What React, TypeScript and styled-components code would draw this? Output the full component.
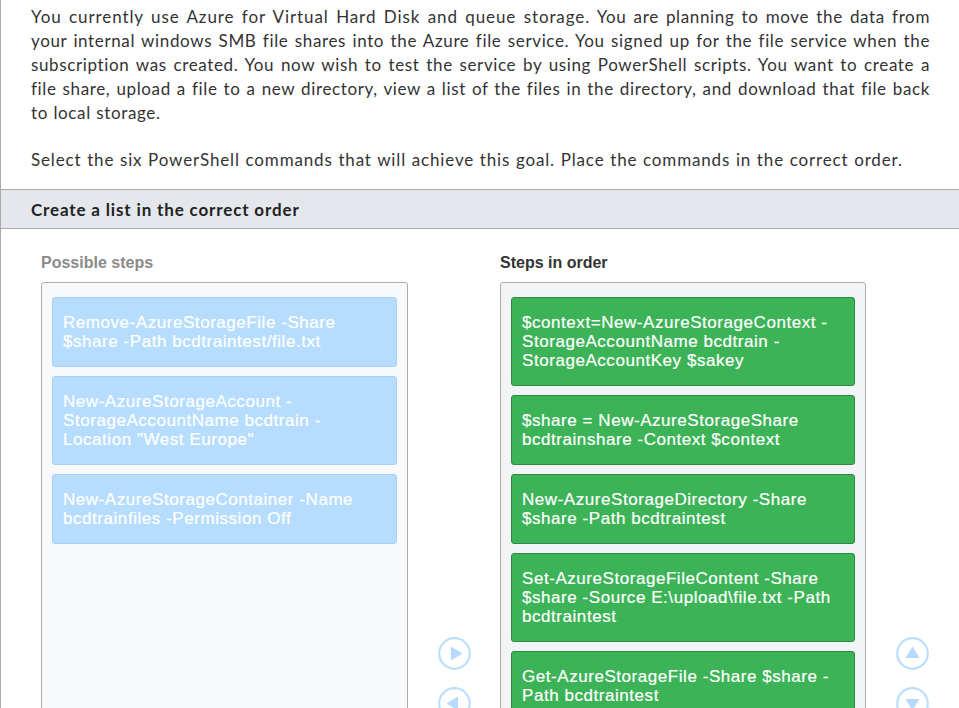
import React from 'react';
import styled, { createGlobalStyle } from 'styled-components';

const GlobalStyle = createGlobalStyle`
  html, body {
    margin: 0;
    padding: 0;
    background: #ffffff;
    overflow: hidden;
  }
`;

const possible = [
  'Remove-AzureStorageFile -Share $share -Path bcdtraintest/file.txt',
  'New-AzureStorageAccount -StorageAccountName bcdtrain -Location "West Europe"',
  'New-AzureStorageContainer -Name bcdtrainfiles -Permission Off',
];

const ordered = [
  '$context=New-AzureStorageContext -StorageAccountName bcdtrain -StorageAccountKey $sakey',
  '$share = New-AzureStorageShare bcdtrainshare -Context $context',
  'New-AzureStorageDirectory -Share $share -Path bcdtraintest',
  'Set-AzureStorageFileContent -Share $share -Source E:\\upload\\file.txt -Path bcdtraintest',
  'Get-AzureStorageFile -Share $share -Path bcdtraintest',
  'Get-AzureStorageFileContent -Share $share -Path bcdtraintest/file.txt',
];

const Page = styled.div`
  width: 958px;
  min-height: 760px;
  border-left: 1px solid #a9a9a9;
  border-right: 1px solid #a9a9a9;
  font-family: Lato, 'Open Sans', sans-serif;
  color: #333333;
`;

const Question = styled.div`
  padding: 5px 29px 17px 30px;
`;

const Para = styled.p<{ $spacing?: number }>`
  margin: 0;
  font-size: 17px;
  line-height: 24px;
  letter-spacing: ${(p) => p.$spacing ?? 0.63}px;
  word-spacing: 0.5px;
  text-align: justify;

  & + & {
    margin-top: 23px;
  }
`;

/* the opening sentence runs a touch wider so the first line breaks after "from" */
const Lead = styled.span`
  letter-spacing: 0.9px;
`;

const Band = styled.div`
  border-top: 1px solid #a9a9a9;
  border-bottom: 1px solid #a9a9a9;
  background: #e4e8ec;
  padding: 0 30px;
  height: 38px;
  display: flex;
  align-items: center;
  font-weight: 700;
  font-size: 17px;
  letter-spacing: 0.85px;
  color: #222222;
`;

const Workspace = styled.div`
  display: flex;
  align-items: flex-start;
  padding: 24px 0 0 40px;
`;

const Column = styled.div<{ $width: number }>`
  display: flex;
  flex-direction: column;
  width: ${(p) => p.$width}px;
`;

const Label = styled.div<{ $muted?: boolean }>`
  font-family: 'Liberation Sans', Arial, sans-serif;
  font-weight: 700;
  font-size: 16px;
  line-height: 20px;
  margin-bottom: 9px;
  color: ${(p) => (p.$muted ? '#8a8a8a' : '#333333')};
`;

const ListBox = styled.div<{ $tone: 'light' | 'grey' }>`
  border: 1px solid #acacac;
  border-radius: 3px;
  background: ${(p) => (p.$tone === 'light' ? '#f8f9fb' : '#f3f4f6')};
  padding: 14px 10px;
  min-height: 460px;
  display: flex;
  flex-direction: column;
  gap: 9px;
`;

const Step = styled.div<{ $done?: boolean }>`
  font-family: 'Liberation Sans', Arial, sans-serif;
  font-size: 17px;
  letter-spacing: 0.55px;
  line-height: 19px;
  color: #ffffff;
  -webkit-text-stroke: 0.2px #ffffff;
  padding: 15px 10px;
  border-radius: 3px;
  border: 1px solid ${(p) => (p.$done ? '#2c8a42' : '#a9d0f3')};
  background: ${(p) => (p.$done ? '#3bb356' : '#b7ddfe')};
`;

const ArrowColumn = styled.div`
  width: 92px;
  display: flex;
  flex-direction: column;
  align-items: center;
  gap: 17px;
  padding-top: 384px;
`;

const CircleButton = styled.button`
  width: 33px;
  height: 33px;
  padding: 0;
  border: none;
  background: transparent;
  cursor: pointer;
  display: block;

  svg {
    display: block;
  }
`;

type Dir = 'right' | 'left' | 'up' | 'down';

const triangles: Record<Dir, string> = {
  right: '13,9.5 13,23.5 24.5,16.5',
  left: '20,9.5 20,23.5 8.5,16.5',
  up: '9.5,21 23.5,21 16.5,9.5',
  down: '9.5,12 23.5,12 16.5,23.5',
};

const Arrow = ({ dir }: { dir: Dir }) => (
  <CircleButton aria-label={dir}>
    <svg width="33" height="33" viewBox="0 0 33 33">
      <circle cx="16.5" cy="16.5" r="15.3" fill="none" stroke="#bcdffd" strokeWidth="2.2" />
      <polygon points={triangles[dir]} fill="#b5dafd" />
    </svg>
  </CircleButton>
);

export default function App() {
  return (
    <>
      <GlobalStyle />
      <Page>
        <Question>
          <Para>
            <Lead>You currently use Azure for Virtual Hard Disk and queue storage.</Lead> You are
            planning to move the data from your internal windows SMB file shares into the Azure file
            service. You signed up for the file service when the subscription was created. You now
            wish to test the service by using PowerShell scripts. You want to create a file share,
            upload a file to a new directory, view a list of the files in the directory, and download
            that file back to local storage.
          </Para>
          <Para $spacing={0.85}>
            Select the six PowerShell commands that will achieve this goal. Place the commands in the
            correct order.
          </Para>
        </Question>
        <Band>Create a list in the correct order</Band>
        <Workspace>
          <Column $width={367}>
            <Label $muted>Possible steps</Label>
            <ListBox $tone="light">
              {possible.map((s) => (
                <Step key={s}>{s}</Step>
              ))}
            </ListBox>
          </Column>
          <ArrowColumn>
            <Arrow dir="right" />
            <Arrow dir="left" />
          </ArrowColumn>
          <Column $width={366}>
            <Label>Steps in order</Label>
            <ListBox $tone="grey">
              {ordered.map((s) => (
                <Step key={s} $done>
                  {s}
                </Step>
              ))}
            </ListBox>
          </Column>
          <ArrowColumn>
            <Arrow dir="up" />
            <Arrow dir="down" />
          </ArrowColumn>
        </Workspace>
      </Page>
    </>
  );
}
